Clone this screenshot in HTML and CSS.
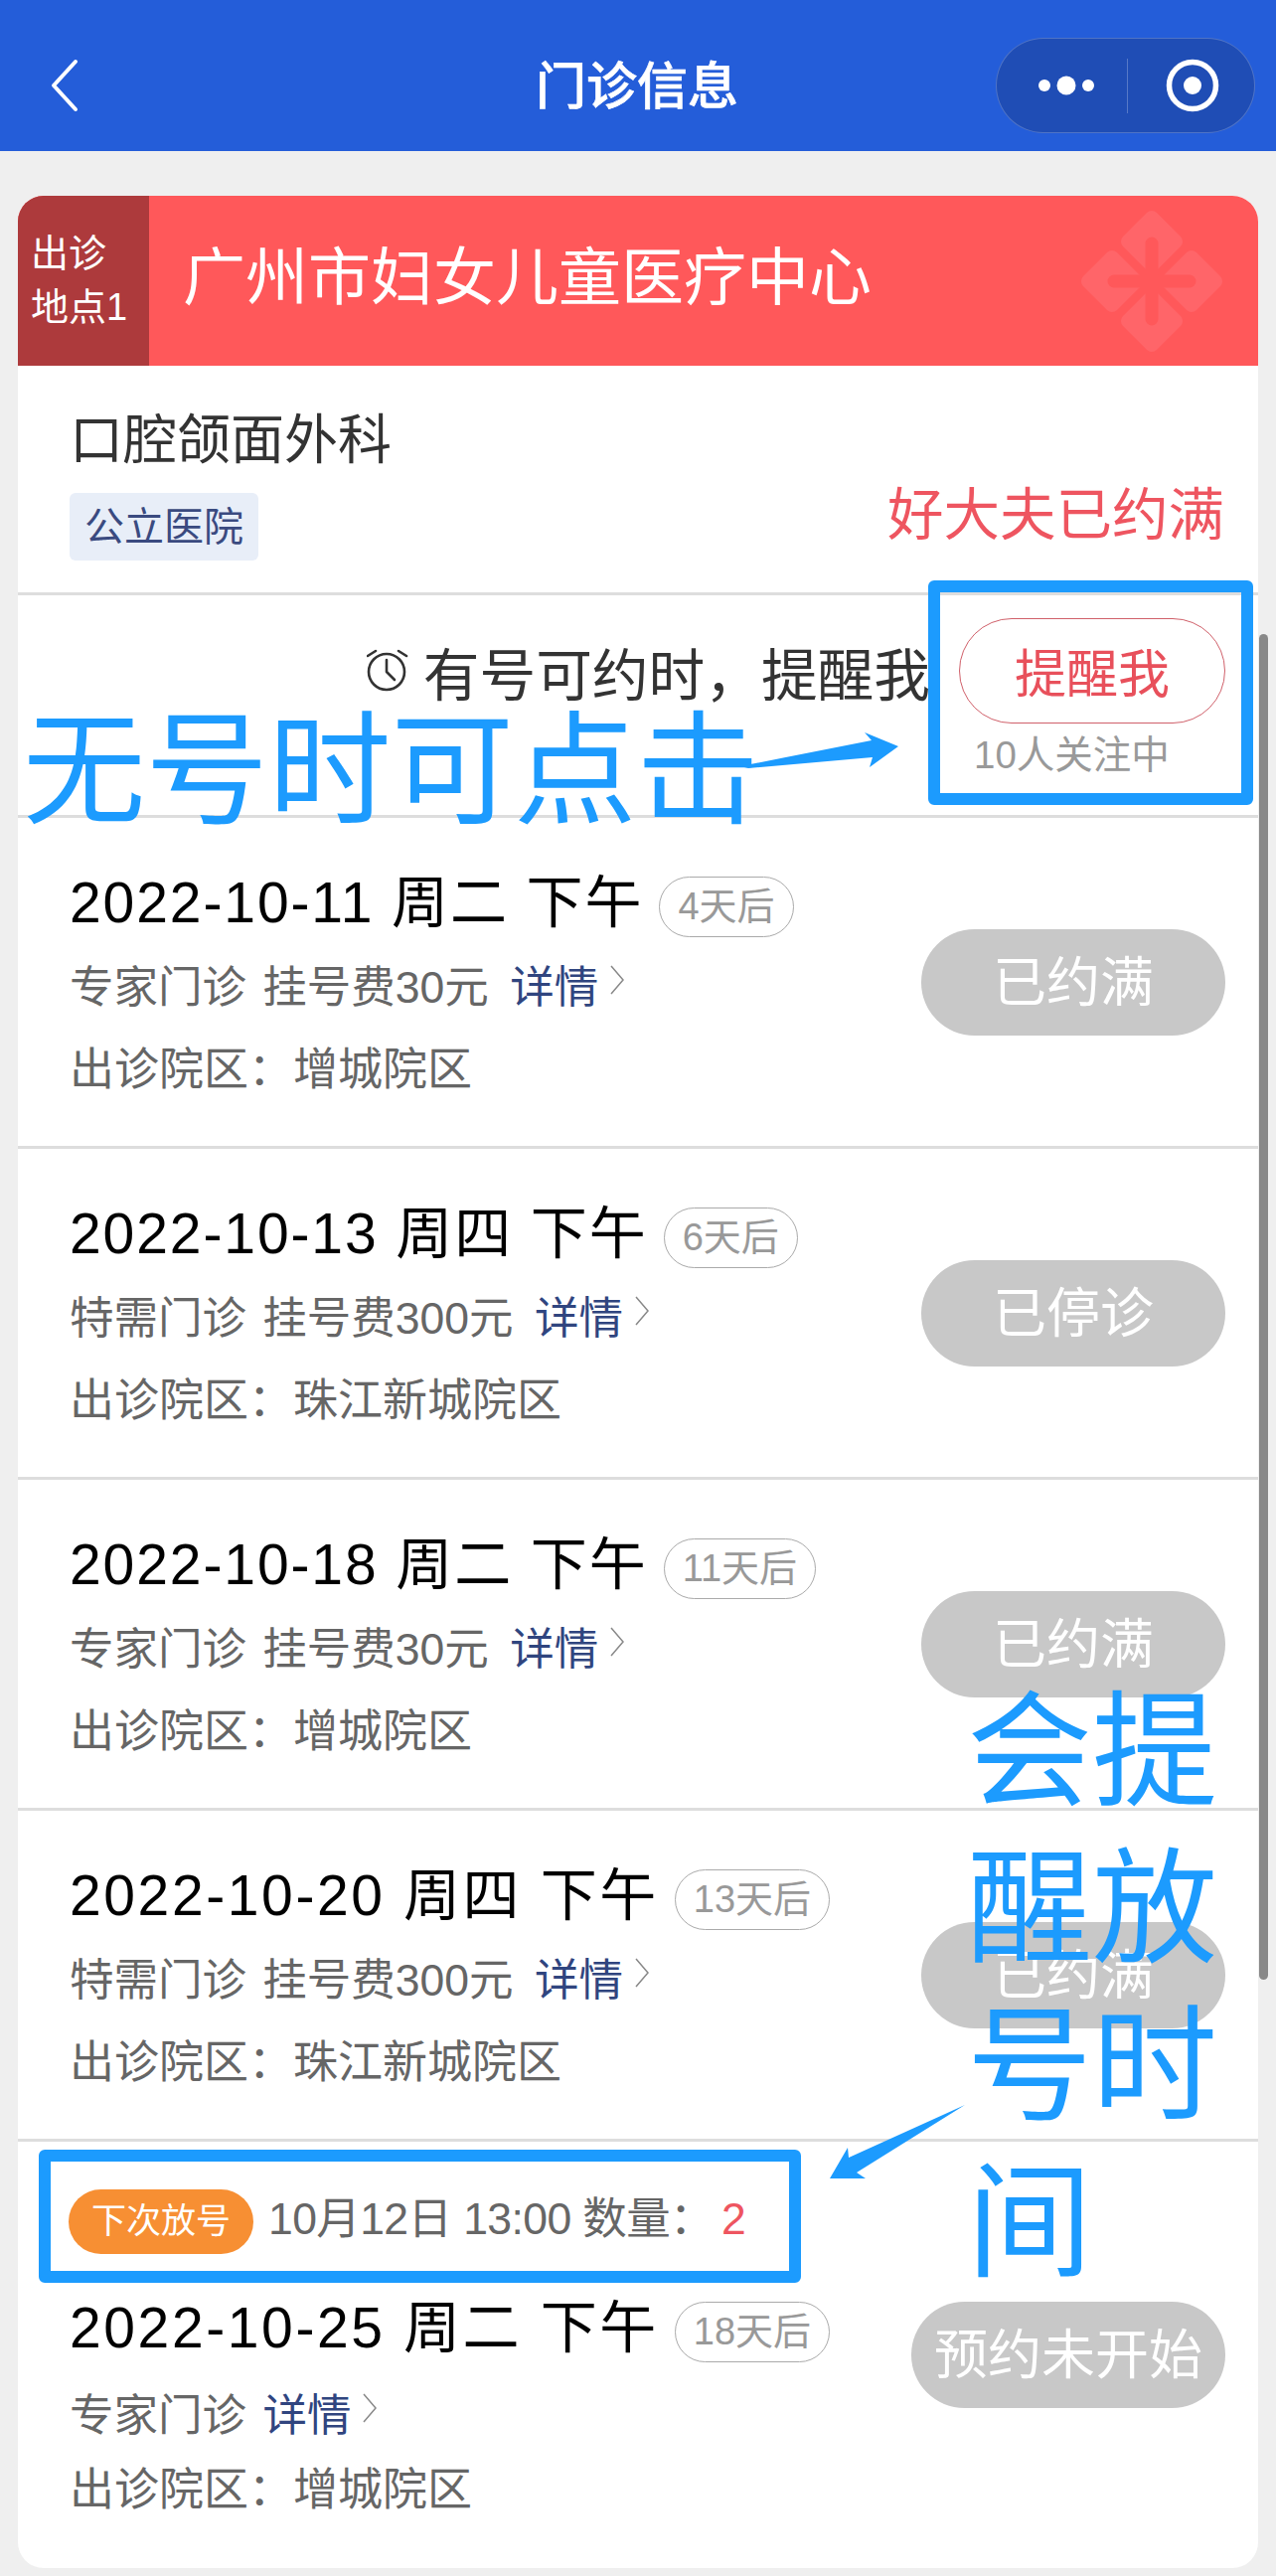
FILE: index.html
```html
<!DOCTYPE html>
<html lang="zh-CN">
<head>
    <meta charset="UTF-8">
    <meta name="viewport" content="width=device-width, initial-scale=1.0">
    <title>门诊信息</title>
    <link rel="stylesheet" href="styles.css">
</head>
<body>
<div class="page">

    <header class="navbar">
        <svg class="back" width="30" height="54" viewBox="0 0 30 54">
            <polyline points="26,3 4,27 26,51" fill="none" stroke="#fff" stroke-width="4" stroke-linecap="round" stroke-linejoin="round"/>
        </svg>
        <h1 class="nav-title">门诊信息</h1>
        <div class="capsule">
            <svg class="capsule-dots" width="70" height="24" viewBox="0 0 70 24">
                <circle cx="13" cy="12" r="6" fill="#fff"/>
                <circle cx="35" cy="12" r="9.5" fill="#fff"/>
                <circle cx="57" cy="12" r="6" fill="#fff"/>
            </svg>
            <span class="capsule-line"></span>
            <svg class="capsule-target" width="54" height="54" viewBox="0 0 54 54">
                <circle cx="27" cy="27" r="23.5" fill="none" stroke="#fff" stroke-width="5.5"/>
                <circle cx="27" cy="27" r="9" fill="#fff"/>
            </svg>
        </div>
    </header>

    <main class="card">
        <div class="hospital">
            <div class="place">出诊<br>地点1</div>
            <div class="hospital-name">广州市妇女儿童医疗中心</div>
            <!-- 医院标志水印 -->
            <svg class="hospital-logo" width="146" height="146" viewBox="0 0 146 146">
                <g fill="#ff6569">
                    <rect x="49" y="9" width="48" height="48" rx="7" transform="rotate(45 73 33)"/>
                    <rect x="49" y="89" width="48" height="48" rx="7" transform="rotate(45 73 113)"/>
                    <rect x="9" y="49" width="48" height="48" rx="7" transform="rotate(45 33 73)"/>
                    <rect x="89" y="49" width="48" height="48" rx="7" transform="rotate(45 113 73)"/>
                </g>
                <path d="M73 35V111M35 73H111" stroke="#ff585a" stroke-width="13" stroke-linecap="round"/>
            </svg>
        </div>

        <section class="dept">
            <div class="dept-name">口腔颌面外科</div>
            <div class="dept-foot">
                <span class="dept-tag">公立医院</span>
                <span class="dept-full">好大夫已约满</span>
            </div>
        </section>

        <section class="remind">
            <div class="remind-text">
                <svg class="clock" width="42" height="44" viewBox="0 0 42 44">
                    <g fill="none" stroke="#333" stroke-width="2.6" stroke-linecap="round" stroke-linejoin="round">
                        <circle cx="20" cy="23" r="18"/>
                        <polyline points="20,11 20,23 28,31"/>
                        <path d="M1 7L9 2M32 2L40 7"/>
                    </g>
                </svg>
                <span>有号可约时，提醒我</span>
            </div>
            <div class="remind-side">
                <div class="remind-btn">提醒我</div>
                <div class="remind-count">10人关注中</div>
            </div>
        </section>

        <section class="slot">
            <div class="slot-info">
                <div class="slot-date">2022-10-11 周二 下午<span class="days">4天后</span></div>
                <div class="slot-fee">专家门诊 挂号费30元 <a class="more">详情<svg class="more-arrow" width="16" height="30" viewBox="0 0 16 30"><polyline points="2,1 14,15 2,29" fill="none" stroke="#888" stroke-width="1.5"/></svg></a></div>
                <div class="slot-area">出诊院区：增城院区</div>
            </div>
            <div class="slot-btn">已约满</div>
        </section>

        <section class="slot">
            <div class="slot-info">
                <div class="slot-date">2022-10-13 周四 下午<span class="days">6天后</span></div>
                <div class="slot-fee">特需门诊 挂号费300元 <a class="more">详情<svg class="more-arrow" width="16" height="30" viewBox="0 0 16 30"><polyline points="2,1 14,15 2,29" fill="none" stroke="#888" stroke-width="1.5"/></svg></a></div>
                <div class="slot-area">出诊院区：珠江新城院区</div>
            </div>
            <div class="slot-btn">已停诊</div>
        </section>

        <section class="slot">
            <div class="slot-info">
                <div class="slot-date">2022-10-18 周二 下午<span class="days">11天后</span></div>
                <div class="slot-fee">专家门诊 挂号费30元 <a class="more">详情<svg class="more-arrow" width="16" height="30" viewBox="0 0 16 30"><polyline points="2,1 14,15 2,29" fill="none" stroke="#888" stroke-width="1.5"/></svg></a></div>
                <div class="slot-area">出诊院区：增城院区</div>
            </div>
            <div class="slot-btn">已约满</div>
        </section>

        <section class="slot">
            <div class="slot-info">
                <div class="slot-date slot-date-wide">2022-10-20 周四 下午<span class="days">13天后</span></div>
                <div class="slot-fee">特需门诊 挂号费300元 <a class="more">详情<svg class="more-arrow" width="16" height="30" viewBox="0 0 16 30"><polyline points="2,1 14,15 2,29" fill="none" stroke="#888" stroke-width="1.5"/></svg></a></div>
                <div class="slot-area">出诊院区：珠江新城院区</div>
            </div>
            <div class="slot-btn">已约满</div>
        </section>

        <section class="slot slot-last">
            <div class="next">
                <span class="next-tag">下次放号</span>
                <span class="next-time">10月12日 13:00 数量：</span>
                <span class="next-num">2</span>
            </div>
            <div class="slot-body">
                <div class="slot-info">
                    <div class="slot-date slot-date-wide">2022-10-25 周二 下午<span class="days">18天后</span></div>
                    <div class="slot-fee">专家门诊 <a class="more">详情<svg class="more-arrow" width="16" height="30" viewBox="0 0 16 30"><polyline points="2,1 14,15 2,29" fill="none" stroke="#888" stroke-width="1.5"/></svg></a></div>
                    <div class="slot-area">出诊院区：增城院区</div>
                </div>
                <div class="slot-btn slot-btn-wide">预约未开始</div>
            </div>
        </section>
    </main>

    <div class="scrollbar"></div>

    <!-- 标注层 -->
    <div class="mark mark-remind"></div>
    <div class="mark mark-next"></div>
    <div class="note note-click">无号时可点击</div>
    <div class="note note-time">会提醒放号时间</div>
    <svg class="arrows" width="1284" height="2592" viewBox="0 0 1284 2592">
        <polygon points="745,771 877,745 870,737 904,751 875,772 878,762 753,773" fill="#1c9bfe"/>
        <polygon points="971,2118 862,2186 871,2192 835,2192 853,2161 854,2171" fill="#1c9bfe"/>
    </svg>

</div>
</body>
</html>
```

FILE: styles.css
```css
* {
    box-sizing: border-box;
}
body {
    margin: 0;
    font-family: "Liberation Sans", "Noto Sans CJK SC", sans-serif;
    background-color: #efefef;
}
.page {
    position: relative;
    width: 1284px;
    height: 2592px;
    overflow: hidden;
    background-color: #efefef;
}

/* 顶部导航 */
.navbar {
    display: grid;
    grid-template-columns: 1fr auto 1fr;
    align-items: center;
    height: 152px;
    padding: 20px 21px 0;
    background-color: #245dd9;
}
.back {
    margin-left: 29px;
}
.nav-title {
    margin: 4px 2px 0 0;
    color: #fff;
    font-size: 51px;
    font-weight: 500;
    line-height: 60px;
    -webkit-text-stroke: 0.6px #fff;
}
.capsule {
    display: flex;
    align-items: center;
    justify-self: end;
    width: 261px;
    height: 96px;
    padding-left: 35px;
    border: 1px solid rgba(255, 255, 255, 0.22);
    border-radius: 48px;
    background-color: #1f4db5;
}
.capsule-line {
    width: 1px;
    height: 55px;
    margin: 0 38px 0 26px;
    background-color: rgba(255, 255, 255, 0.25);
}

/* 卡片 */
.card {
    margin: 45px 18px 0;
    height: 2387px;
    border-radius: 26px;
    overflow: hidden;
    background-color: #fff;
}
.hospital {
    position: relative;
    display: flex;
    height: 171px;
    background-color: #ff585a;
    color: #fff;
}
.place {
    width: 132px;
    padding: 31px 0 0 13px;
    background-color: #ad3a3c;
    font-size: 38px;
    line-height: 54px;
}
.hospital-name {
    padding-left: 34px;
    font-size: 63px;
    line-height: 164px;
}
.hospital-logo {
    position: absolute;
    top: 13px;
    right: 34px;
}

.dept {
    height: 231px;
    padding: 45px 34px 0 52px;
    border-bottom: 3px solid #ddd;
}
.dept-name {
    color: #333;
    font-size: 54px;
    line-height: 60px;
}
.dept-foot {
    display: flex;
    align-items: flex-start;
    justify-content: space-between;
    margin-top: 23px;
}
.dept-tag {
    padding: 0 15px;
    height: 68px;
    border-radius: 6px;
    background-color: #e8eef8;
    color: #3a4a80;
    font-size: 40px;
    line-height: 68px;
}
.dept-full {
    margin-top: -11px;
    color: #ee5560;
    font-size: 56.5px;
    line-height: 68px;
}

.remind {
    display: flex;
    justify-content: flex-end;
    height: 224px;
    padding: 23px 33px 0 0;
    border-bottom: 3px solid #ddd;
}
.remind-text {
    display: flex;
    align-items: center;
    height: 106px;
    margin-right: 29px;
    color: #333;
    font-size: 56.7px;
}
.clock {
    margin-right: 15px;
}
.remind-btn {
    width: 268px;
    height: 106px;
    border: 1px solid #d0606a;
    border-radius: 53px;
    color: #e8505b;
    font-size: 52px;
    line-height: 112px;
    text-align: center;
}
.remind-count {
    margin-top: 9px;
    padding-left: 15px;
    color: #999;
    font-size: 38.5px;
    line-height: 46px;
}

/* 出诊时段 */
.slot {
    display: flex;
    align-items: center;
    justify-content: space-between;
    height: 333px;
    padding: 0 33px 0 52px;
    border-bottom: 3px solid #ddd;
}
.slot-info {
    padding-top: 4px;
}
.slot-date {
    display: flex;
    align-items: flex-start;
    height: 64px;
    color: #000;
    font-size: 57px;
    line-height: 64px;
    letter-spacing: 1.9px;
    white-space: pre;
}
.slot-date-wide {
    letter-spacing: 2.6px;
}
.days {
    height: 61px;
    margin: 6px 0 0 16px;
    padding: 0 18px;
    border: 1px solid #aaa;
    border-radius: 31px;
    color: #999;
    font-size: 38px;
    line-height: 59px;
    letter-spacing: 0;
}
.slot-fee,
.next-time {
    color: #666;
    font-size: 44.5px;
}
.slot-fee {
    margin-top: 26px;
    line-height: 56px;
    word-spacing: 4px;
}
.slot-area {
    margin-top: 27px;
    color: #666;
    font-size: 45px;
    line-height: 56px;
}
.more {
    margin-left: 5px;
    color: #30457f;
}
.more-arrow {
    margin-left: 11px;
    vertical-align: 8px;
}
.slot-btn {
    width: 306px;
    height: 107px;
    border-radius: 54px;
    background-color: #c8c8c8;
    color: #fff;
    font-size: 54px;
    line-height: 108px;
    text-align: center;
}
.slot-btn-wide {
    align-self: flex-start;
    width: 316px;
    margin-top: 6px;
}

.slot-last {
    display: block;
    height: 431px;
    padding-top: 48px;
    border-bottom: 0;
}
.slot-body {
    display: flex;
    align-items: center;
    justify-content: space-between;
    margin-top: 42px;
}
.slot-last .slot-info {
    padding-top: 0;
}
.slot-last .slot-fee {
    margin-top: 29px;
}
.slot-last .slot-area {
    margin-top: 19px;
}
.slot-last .more {
    margin-left: 0;
}
.next {
    display: flex;
    align-items: center;
    height: 65px;
}
.next-tag {
    height: 65px;
    margin: 0 15px 0 -1px;
    padding: 0 23px;
    border-radius: 33px;
    background-color: #f78f33;
    color: #fff;
    font-size: 35px;
    line-height: 63px;
}
.next-time {
    margin-bottom: 6px;
    line-height: 48px;
    letter-spacing: -0.6px;
}
.next-num {
    margin: 0 0 6px 8px;
    color: #ee5560;
    font-size: 44.5px;
    line-height: 48px;
}

.scrollbar {
    position: absolute;
    top: 638px;
    left: 1267px;
    width: 9px;
    height: 1354px;
    border-radius: 5px;
    background-color: #888;
}

/* 标注 */
.mark {
    position: absolute;
    border: 12px solid #1c9bfe;
    border-radius: 6px;
}
.mark-remind {
    top: 584px;
    left: 934px;
    width: 327px;
    height: 226px;
}
.mark-next {
    top: 2163px;
    left: 39px;
    width: 767px;
    height: 134px;
}
.note {
    position: absolute;
    color: #1c9bfe;
    font-size: 123.5px;
    line-height: 158px;
}
.note-click {
    top: 717px;
    left: 23px;
    line-height: 118px;
}
.note-time {
    top: 1685px;
    left: 973px;
    width: 255px;
    font-size: 126px;
}
.arrows {
    position: absolute;
    top: 0;
    left: 0;
}
```
